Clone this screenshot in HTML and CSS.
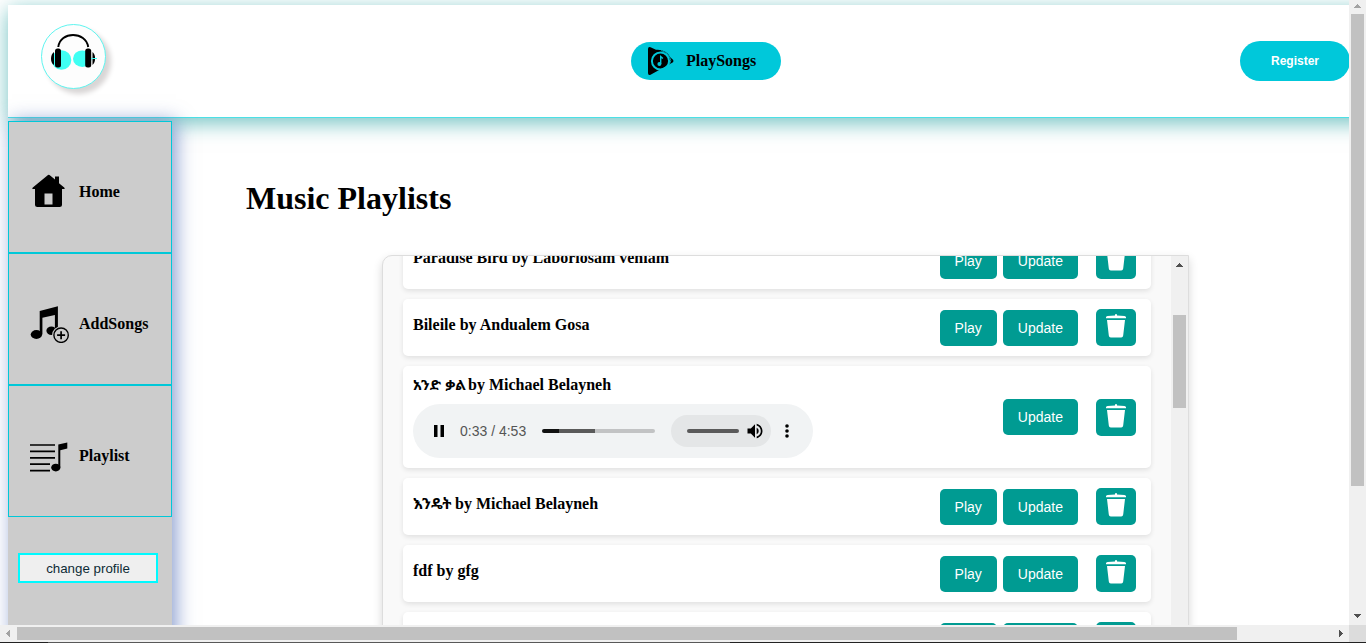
FILE: index.html
```
<!DOCTYPE html>
<html lang="en">
<head>
<meta charset="utf-8">
<title>PlaySongs</title>
<link rel="stylesheet" href="styles.css">
</head>
<body>
<svg class="defs" width="0" height="0">
  <symbol id="trash" viewBox="0 0 20 24"><path d="M0 4.200V3.200Q0 2.200 1.600 2L9 1.400V.2h2v1.200l7.400.6q1.600.2 1.600 1.200v1zM1 6h18l-1.800 15.600q-.2 2-2 2H4.800q-1.800 0-2-2z" fill="#fff"/></symbol>
</svg>
<div class="window">
  <div class="page">
    <header class="header">
      <div class="logo">
        <svg width="63" height="63" viewBox="0 0 63 63">
          <circle cx="19.500" cy="35" r="9.800" fill="#3ffff3"/>
          <ellipse cx="40.300" cy="33.700" rx="9.300" ry="8.300" fill="#3ffff3"/>
          <path d="M16.300 22C18 6 44 6 46.200 22" fill="none" stroke="#000" stroke-width="2"/>
          <rect x="13" y="23.500" width="6" height="19" rx="2.500"/>
          <rect x="43.200" y="23.500" width="6" height="19" rx="2.500"/>
          <path d="M12 27v13C8 38 8 29.500 12 27zM50.500 27v13c3.500-2.500 3.500-10.500 0-13z"/>
          <path d="M49.500 33.500h5.500" stroke="#3ffff3"/>
        </svg>
      </div>
      <div class="brand">
        <svg width="28" height="30" viewBox="0 0 28 30">
          <path d="M1 3Q1 .5 3.500 1.200L9 3.800Q19 3 23.500 11.500L26 13.800q1 1.200 0 2.400L23 18 4 28.500Q1 30 1 27z"/>
          <circle cx="13.500" cy="15" r="8.600" fill="none" stroke="#00c8da" stroke-width="2"/>
          <path d="M14 4.600Q22 7 23.800 14.500L22.500 18" fill="none" stroke="#00c8da" stroke-width=".8"/>
          <path d="M13.700 18V10.500l2.200 2" fill="none" stroke="#00c8da" stroke-width="1.400"/>
          <circle cx="12.400" cy="18" r="2" fill="#00c8da"/>
        </svg>
        <span>PlaySongs</span>
      </div>
      <button class="register">Register</button>
    </header>
    <div class="body">
      <aside class="sidebar">
        <a class="nav">
          <svg width="40" height="40" viewBox="0 0 40 40"><path d="M19 4 3.800 16.500Q2.500 18 4.500 18H6v15.500Q6 36 8.500 36h22q2.500 0 2.500-2.500V18h1.500q2 0 .7-1.500L30 12.300V5.500h-4v3L20.500 4q-.7-.6-1.500 0z"/><path d="M15.500 22.500h8v11h-8z" fill="#ccc"/></svg>
          <span>Home</span>
        </a>
        <a class="nav">
          <svg width="40" height="40" viewBox="-.4 -1.700 40 40"><path d="M10.300 6.200 28.500 1.500V24h-3V10.200L13 13v16.500h-2.700z"/><ellipse cx="7" cy="29.800" rx="5.700" ry="4.400"/><ellipse cx="22" cy="26" rx="5" ry="4.200"/><circle cx="31.700" cy="30.500" r="9" fill="#ccc"/><circle cx="31.700" cy="30.500" r="7.200" fill="none" stroke="#000" stroke-width="1.400"/><path d="M27.700 30.500h8M31.700 26.500v8" stroke="#000" stroke-width="1.700"/></svg>
          <span>AddSongs</span>
        </a>
        <a class="nav">
          <svg width="40" height="40" viewBox="0 -1.400 40 40"><path d="M1 8.600h25M1 15h25M1 21.400h25M1 27.800h20M1 34.200h20" stroke="#000" stroke-width="1.700"/><path d="M29.300 8 38.300 6v6.200L31.300 13.800V31h-2z"/><ellipse cx="26.800" cy="31.200" rx="4.600" ry="3.900"/></svg>
          <span>Playlist</span>
        </a>
        <button class="profile">change profile</button>
      </aside>
      <main class="main">
        <h1>Music Playlists</h1>
        <section class="playlist">
          <div class="songs">
            <div class="song cut"><div class="title">Paradise Bird by Laboriosam veniam</div><button class="btn">Play</button><button class="btn">Update</button><button class="btn del"><svg width="20" height="24"><use href="#trash"/></svg></button></div>
            <div class="song"><div class="title">Bileile by Andualem Gosa</div><button class="btn">Play</button><button class="btn">Update</button><button class="btn del"><svg width="20" height="24"><use href="#trash"/></svg></button></div>
            <div class="song playing">
              <div class="title"><span class="am am1">አንድ ቃል</span> by Michael Belayneh
                <div class="audio">
                  <svg class="pause" width="10" height="12"><path d="M0 0h3.500v12H0zM6.500 0H10v12H6.500z"/></svg>
                  <span class="time">0:33 / 4:53</span>
                  <span class="track"></span>
                  <span class="volume"><span class="level"></span>
                    <svg width="20" height="20" viewBox="0 0 24 24"><path d="M3 9v6h4l5 5V4L7 9zm13.500 3A4.500 4.500 0 0 0 14 7.970v8.050A4.500 4.500 0 0 0 16.500 12zM14 3.230v2.060c2.890.86 5 3.540 5 6.710s-2.110 5.850-5 6.710v2.060c4.010-.91 7-4.490 7-8.770s-2.990-7.860-7-8.770z"/></svg>
                  </span>
                  <svg class="dots" width="4" height="14"><circle cx="2" cy="2" r="1.800"/><circle cx="2" cy="7" r="1.800"/><circle cx="2" cy="12" r="1.800"/></svg>
                </div>
              </div>
              <button class="btn">Update</button><button class="btn del"><svg width="20" height="24"><use href="#trash"/></svg></button>
            </div>
            <div class="song"><div class="title"><span class="am am2">እንዴት</span> by Michael Belayneh</div><button class="btn">Play</button><button class="btn">Update</button><button class="btn del"><svg width="20" height="24"><use href="#trash"/></svg></button></div>
            <div class="song"><div class="title">fdf by gfg</div><button class="btn">Play</button><button class="btn">Update</button><button class="btn del"><svg width="20" height="24"><use href="#trash"/></svg></button></div>
            <div class="song"><div class="title"></div><button class="btn">Play</button><button class="btn">Update</button><button class="btn del"><svg width="20" height="24"><use href="#trash"/></svg></button></div>
          </div>
          <div class="bar inner"><svg width="17" height="17"><path d="M5 11h7v-1h-1V9h-1V8H9V7H8v1H7v1H6v1H5z" fill="#505050"/></svg><div class="thumb"></div></div>
        </section>
      </main>
    </div>
  </div>
  <div class="bar vertical">
    <svg width="17" height="14"><path d="M5 8h7V7h-1V6h-1V5H9V4H8v1H7v1H6v1H5z" fill="#a3a3a3"/></svg>
    <div class="thumb"></div>
    <svg class="end" width="17" height="17"><path d="M5 6h7v1h-1v1h-1v1H9v1H8V9H7V8H6V7H5z" fill="#505050"/></svg>
  </div>
  <div class="hbar">
    <svg width="17" height="17"><path d="M10 5v7H9v-1H8v-1H7V9H6V8h1V7h1V6h1V5z" fill="#a3a3a3"/></svg>
    <div class="thumb"></div>
    <svg class="end" width="17" height="17"><path d="M7 5v7h1v-1h1v-1h1V9h1V8h-1V7H9V6H8V5z" fill="#505050"/></svg>
  </div>
  <div class="corner"></div>
  <div class="edge"></div>
</div>
</body>
</html>
```
FILE: styles.css
```
* { box-sizing: border-box; }
body { margin: 0; overflow: hidden; background: #fff; font-family: "Liberation Serif", "Noto Sans Ethiopic", serif; color: #000; }
button { border: 0; margin: 0; padding: 0; font-family: "Liberation Sans", sans-serif; }
svg { display: block; flex: none; }
.defs { position: absolute; }

.window { display: grid; grid-template: 625px 17px 1px / 1349px 17px; width: 1366px; height: 643px; }
.page { overflow: hidden; padding: 5px 0 0 8px; }

.header {
  display: flex; align-items: flex-start; width: 1500px; height: 113px;
  background: #fff; border-bottom: 1px solid #4ce0e6;
  box-shadow: 0 5px 20px rgba(6,148,148,.57);
}
.logo { width: 65px; height: 65px; margin: 19px 0 0 33px; border: 1px solid #5ff5f0; border-radius: 50%; background: #fdfdfd; box-shadow: 5px 5px 5px #d9d6d6; }
.brand {
  display: flex; align-items: center; gap: 11px; width: 150px; height: 38px; margin: 37px 0 0 525px; padding-left: 16px;
  border-radius: 19px; background: #00c8da; font-weight: bold; font-size: 16px;
}
.register { width: 110px; height: 40px; margin: 36px 0 0 459px; border-radius: 20px; background: #00c8da; color: #fff; font-size: 12px; font-weight: bold; }

.body { display: flex; margin-top: 3px; }
.sidebar { position: relative; width: 164px; height: 600px; background: #ccc; box-shadow: 4px 0 18px rgba(74,105,181,.65); }
.nav { display: flex; align-items: center; height: 132px; padding: 9px 0 0 20px; border: 1px solid #00c8d8; font-weight: bold; font-size: 16px; }
.nav span { width: 80px; margin-left: 10px; }
.nav svg { margin-bottom: 1px; }
.profile { display: block; width: 140px; height: 30px; margin: 36px 0 0 10px; border: 2px solid #00faff; background: #efefef; color: #0d2b36; font-size: 13.333px; }

.main { width: 1177px; padding: 59px 0 0 74px; }
h1 { margin: 0; font-size: 32px; line-height: 37px; }
.playlist {
  display: flex; width: 807px; height: 440px; margin: 38px 0 0 136px; overflow: hidden;
  border: 1px solid #ddd; border-radius: 10px 0 0 0; background: #f9f9f9; box-shadow: 0 4px 10px rgba(0,0,0,.16);
}
.songs { flex: 1; padding: 0 20px; display: flex; flex-direction: column; gap: 10px; }
.song { flex: none; display: flex; align-items: flex-end; height: 57px; padding: 0 15px 10px 10px; border-radius: 5px; background: #fff; box-shadow: 0 2px 5px rgba(0,0,0,.1); }
.cut { margin-top: -24px; }
.title { align-self: flex-start; flex: 1; padding-top: 17px; font-weight: bold; font-size: 16px; line-height: 18px; white-space: nowrap; }
.am { display: inline-block; height: 18px; vertical-align: top; font-size: 15px; }
.am1 { width: 51px; word-spacing: 1px; font-size: 14.500px; }
.am2 { width: 38px; }
.btn { height: 36px; margin-left: 6px; padding: 0 15px; border-radius: 5px; background: #009b92; color: #fff; font-size: 14px; }
.del { width: 40px; height: 37px; margin-left: 18px; padding: 5px 10px 8px; }
.playing { height: 102px; padding-bottom: 32px; }
.playing .title { padding-top: 10px; }
.playing .btn:not(.del) { margin-bottom: 1px; }

.audio { display: flex; align-items: center; width: 400px; height: 54px; margin-top: 10px; padding-left: 21px; border-radius: 27px; background: #f1f3f4; }
.time { width: 67px; margin-left: 16px; font: 14px "Liberation Sans", sans-serif; color: #555; }
.track { width: 113px; height: 4px; margin-left: 15px; border-radius: 2px; background: linear-gradient(90deg, #111 17px, #5a5a5a 17px 53px, #c2c3c4 53px); }
.volume { display: flex; align-items: center; gap: 6px; width: 100px; height: 32px; margin-left: 16px; padding-left: 16px; border-radius: 16px; background: #e4e6e7; }
.level { width: 52px; height: 4px; border-radius: 2px; background: #5a5a5a; }
.dots { margin-left: 14px; }

.bar { width: 17px; background: #f0f0f0; display: flex; flex-direction: column; }
.bar .thumb { width: 13px; margin-left: 2px; background: #c1c1c1; }
.inner .thumb { height: 93px; margin-top: 42px; }
.vertical .thumb { height: 472px; }
.end { margin-top: auto; }
.hbar { display: flex; align-items: center; background: #f0f0f0; }
.hbar .thumb { width: 1220px; height: 13px; background: #c1c1c1; }
.hbar .end { margin: 0 0 0 auto; }
.corner { background: #dcdcdc; }
.edge { grid-column: 1 / 3; background: linear-gradient(90deg, #222 48px, #585858 48px 730px, #222 730px); }
```
